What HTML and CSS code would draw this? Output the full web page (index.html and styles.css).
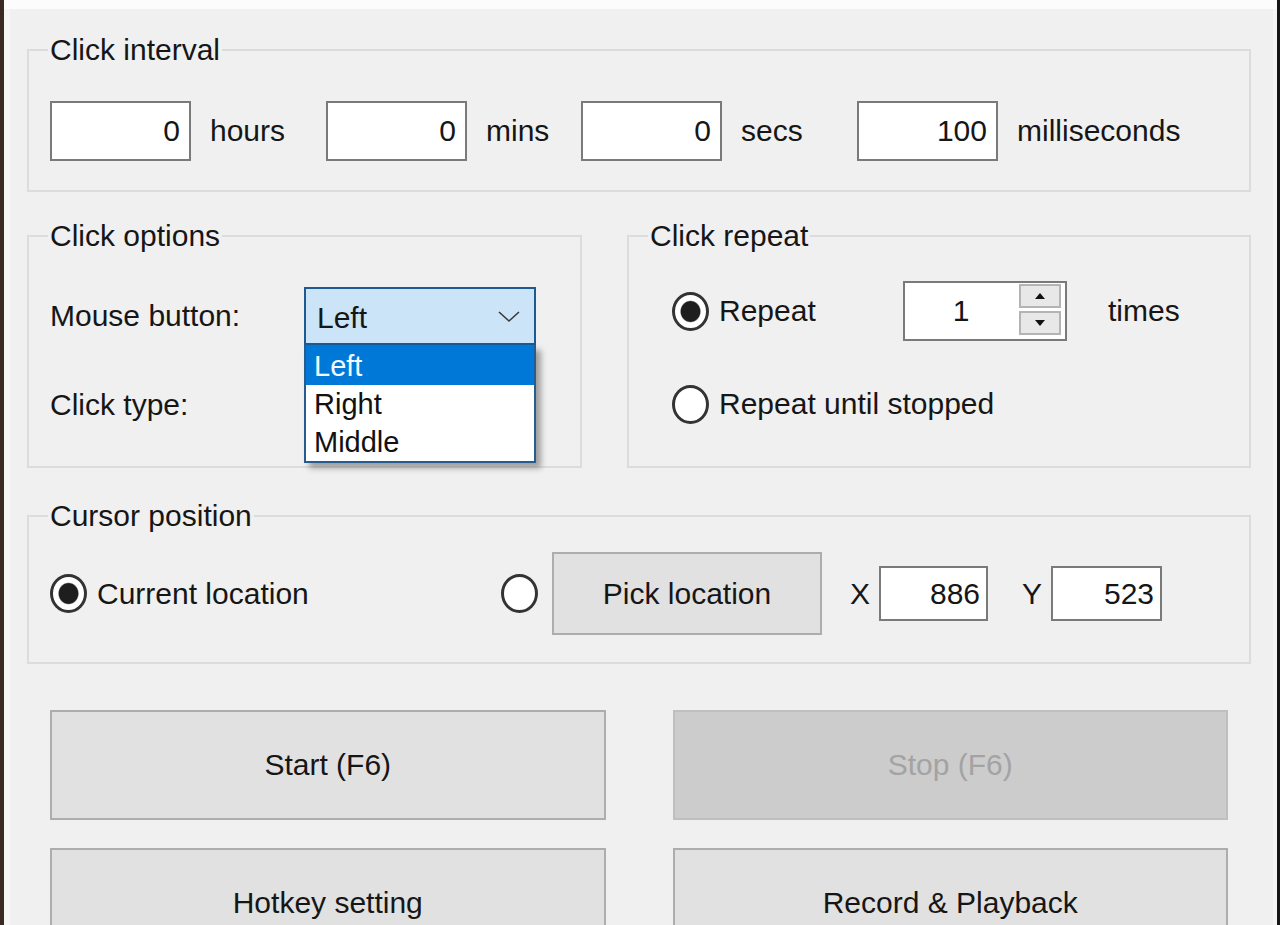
FILE: index.html
```html
<!DOCTYPE html>
<html lang="en">
<head>
    <meta charset="UTF-8">
    <meta name="viewport" content="width=device-width, initial-scale=1.0">
    <title>Auto Clicker</title>
    <link rel="stylesheet" href="styles.css">
</head>
<body>
    <div class="window">
        <div class="title-edge"></div>
        <div class="client">

            <fieldset class="group group-interval">
                <legend>Click interval</legend>
                <div class="interval-row">
                    <div class="unit unit-wide">
                        <input class="field field-interval" type="text" value="0" readonly>
                        <span class="unit-label">hours</span>
                    </div>
                    <div class="unit unit-narrow">
                        <input class="field field-interval" type="text" value="0" readonly>
                        <span class="unit-label">mins</span>
                    </div>
                    <div class="unit unit-wide">
                        <input class="field field-interval" type="text" value="0" readonly>
                        <span class="unit-label">secs</span>
                    </div>
                    <div class="unit">
                        <input class="field field-interval" type="text" value="100" readonly>
                        <span class="unit-label">milliseconds</span>
                    </div>
                </div>
            </fieldset>

            <div class="group-pair">
                <fieldset class="group group-options">
                    <legend>Click options</legend>
                    <div class="option-row">
                        <span class="option-label">Mouse button:</span>
                        <div class="combo combo-open">
                            <div class="combo-box">
                                <span>Left</span>
                                <svg class="chevron" width="22" height="12" viewBox="0 0 22 12">
                                    <polyline points="1,1 11,10 21,1" fill="none" stroke="#3a3a3a" stroke-width="1.6"/>
                                </svg>
                            </div>
                            <ul class="combo-list">
                                <li class="selected">Left</li>
                                <li>Right</li>
                                <li>Middle</li>
                            </ul>
                        </div>
                    </div>
                    <div class="option-row option-row-second">
                        <span class="option-label">Click type:</span>
                        <!-- hidden behind the open list -->
                        <div class="combo">
                            <div class="combo-box"></div>
                        </div>
                    </div>
                </fieldset>

                <fieldset class="group group-repeat">
                    <legend>Click repeat</legend>
                    <div class="repeat-row">
                        <label class="radio-option repeat-choice"><span class="radio checked"></span>Repeat</label>
                        <div class="spin">
                            <input class="spin-value" type="text" value="1" readonly>
                            <div class="spin-buttons">
                                <span class="spin-btn">
                                    <svg width="10" height="6" viewBox="0 0 10 6"><polygon points="0,6 5,0 10,6" fill="#111"/></svg>
                                </span>
                                <span class="spin-btn">
                                    <svg width="10" height="6" viewBox="0 0 10 6"><polygon points="0,0 10,0 5,6" fill="#111"/></svg>
                                </span>
                            </div>
                        </div>
                        <span class="times">times</span>
                    </div>
                    <div class="repeat-row repeat-row-second">
                        <label class="radio-option"><span class="radio"></span>Repeat until stopped</label>
                    </div>
                </fieldset>
            </div>

            <fieldset class="group group-cursor">
                <legend>Cursor position</legend>
                <div class="cursor-row">
                    <label class="radio-option current-choice"><span class="radio checked"></span>Current location</label>
                    <span class="radio"></span>
                    <button class="btn btn-pick">Pick location</button>
                    <span class="coord-label coord-x">X</span>
                    <input class="field field-coord" type="text" value="886" readonly>
                    <span class="coord-label coord-y">Y</span>
                    <input class="field field-coord field-coord-y" type="text" value="523" readonly>
                </div>
            </fieldset>

            <div class="actions">
                <button class="btn btn-big">Start (F6)</button>
                <button class="btn btn-big" disabled>Stop (F6)</button>
                <button class="btn btn-big">Hotkey setting</button>
                <button class="btn btn-big">Record &amp; Playback</button>
            </div>

        </div>
    </div>
</body>
</html>
```

FILE: styles.css
```css
/* Global Reset */
* {
    margin: 0;
    padding: 0;
    box-sizing: border-box;
}

html, body {
    height: 100%;
    overflow: hidden;
}

body {
    font-family: 'Liberation Sans', Arial, sans-serif;
    font-size: 30px;
    color: #161616;
    background: #f0f0f0;
}

/* Window frame */
.window {
    height: 100vh;
    overflow: hidden;
    border-left: 4px solid #3b2924;
    border-right: 3px solid #161616;
    background: #f0f0f0;
}

.title-edge {
    height: 9px;
    background: #fcfcfc;
}

.client {
    border-left: 6px solid #f6f6f6;
    border-right: 4px solid #f6f6f6;
    padding: 24px 22px 0 17px;
}

/* Group boxes */
.group {
    border: 2px solid #dcdcdc;
    min-width: 0;
}

.group legend {
    font-size: 30px;
    line-height: 34px;
    padding: 0 2px;
    margin-left: -2px;
}

.group-interval {
    padding: 34px 20px 29px 21px;
}

.interval-row {
    display: flex;
    align-items: center;
}

.unit {
    display: flex;
    align-items: center;
}

.unit-wide {
    width: 276px;
}

.unit-narrow {
    width: 255px;
}

.unit-label {
    margin-left: 19px;
}

/* Text boxes */
.field {
    font: inherit;
    color: #161616;
    background: #fff;
    border: 2px solid #7a7a7a;
    outline: none;
    text-align: right;
}

.field-interval {
    width: 141px;
    height: 60px;
    padding: 0 9px;
}

.field-coord {
    width: 109px;
    height: 55px;
    padding: 0 6px;
}

.field-coord-y {
    width: 111px;
}

/* Options + repeat */
.group-pair {
    display: flex;
    gap: 45px;
    margin-top: 27px;
}

.group-options {
    width: 555px;
    padding: 34px 20px 32px 21px;
}

.option-row {
    display: flex;
    align-items: center;
    height: 58px;
}

.option-row-second {
    margin-top: 31px;
}

.option-label {
    width: 254px;
}

.combo {
    position: relative;
    width: 232px;
    height: 58px;
}

.combo-box {
    display: flex;
    align-items: center;
    justify-content: space-between;
    height: 100%;
    padding: 4px 14px 0 11px;
    background: #e1e1e1;
    border: 2px solid #adadad;
}

.combo-open .combo-box {
    background: #cce4f7;
    border-color: #1c5a91;
}

.chevron {
    margin-top: -2px;
}

/* Dropdown list */
.combo-list {
    position: absolute;
    top: 100%;
    left: 0;
    width: 100%;
    z-index: 2;
    list-style: none;
    background: #fff;
    border: 2px solid #265d8e;
    border-top: none;
    box-shadow: 5px 5px 6px rgba(0, 0, 0, 0.35);
    font-size: 29px;
    color: #111;
}

.combo-list li {
    height: 38px;
    line-height: 38px;
    padding-left: 8px;
}

.combo-list li.selected {
    height: 40px;
    line-height: 42px;
    background: #0078d7;
    color: #f2fbff;
}

.group-repeat {
    flex: 1;
    padding: 28px 20px 42px 43px;
}

.group-repeat legend {
    margin-left: -24px;
}

.repeat-row {
    display: flex;
    align-items: center;
    height: 60px;
}

.repeat-row-second {
    height: 40px;
    margin-top: 43px;
}

/* Radio buttons */
.radio-option {
    display: flex;
    align-items: center;
    gap: 10px;
}

.radio {
    flex: none;
    display: inline-block;
    width: 37px;
    height: 39px;
    border: 3px solid #333;
    border-radius: 50%;
    background: #fff;
}

.radio.checked {
    background: radial-gradient(closest-side, #1e1e1e 60%, #fff 68%);
}

.repeat-choice {
    width: 231px;
}

/* Spin box */
.spin {
    display: flex;
    width: 164px;
    height: 60px;
    border: 2px solid #7a7a7a;
    background: #fff;
}

.spin-value {
    width: 112px;
    font: inherit;
    color: #161616;
    border: none;
    outline: none;
    text-align: center;
    background: transparent;
}

.spin-buttons {
    display: flex;
    flex-direction: column;
    gap: 3px;
    width: 46px;
    padding: 1px 2px 4px 2px;
}

.spin-btn {
    flex: 1;
    display: flex;
    align-items: center;
    justify-content: center;
    background: #e8e8e8;
    border: 2px solid #b4b4b4;
}

.times {
    margin-left: 41px;
}

/* Cursor position */
.group-cursor {
    margin-top: 31px;
    padding: 19px 20px 27px 21px;
}

.cursor-row {
    display: flex;
    align-items: center;
    height: 83px;
}

.current-choice {
    width: 451px;
}

.coord-label {
    margin-right: 9px;
}

.coord-x {
    margin-left: 28px;
}

.coord-y {
    margin-left: 34px;
}

/* Buttons */
.btn {
    font: inherit;
    color: #161616;
    background: #e1e1e1;
    border: 2px solid #adadad;
}

.btn:disabled {
    color: #a3a3a3;
    background: #cccccc;
    border-color: #bfbfbf;
}

.btn-pick {
    width: 270px;
    height: 83px;
    margin-left: 14px;
}

.actions {
    display: grid;
    grid-template-columns: 1fr 1fr;
    grid-auto-rows: 110px;
    column-gap: 67px;
    row-gap: 28px;
    margin: 46px 23px 0 23px;
}
```
